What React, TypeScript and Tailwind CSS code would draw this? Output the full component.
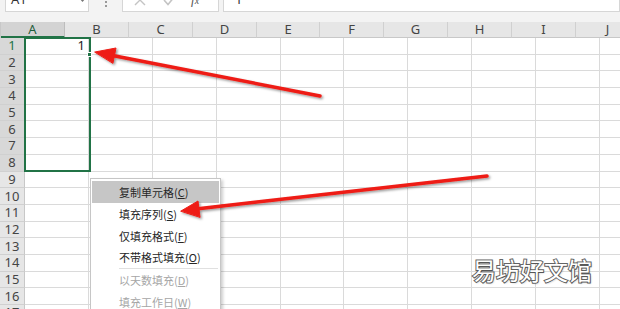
import React from 'react'

const COLS = ['A', 'B', 'C', 'D', 'E', 'F', 'G', 'H', 'I', 'J']
const COL_W = ['w-[64px]', 'w-[64px]', 'w-[64px]', 'w-[64px]', 'w-[63px]', 'w-[64px]', 'w-[64px]', 'w-[64px]', 'w-[64px]', 'w-[64px]']
const ROWS = Array.from({ length: 17 }, (_, i) => i + 1)

type MenuItem = { label: string; key: string; disabled?: boolean; active?: boolean; sep?: boolean }

const MENU: MenuItem[] = [
  { label: '复制单元格', key: 'C', active: true },
  { label: '填充序列', key: 'S' },
  { label: '仅填充格式', key: 'F' },
  { label: '不带格式填充', key: 'O', sep: true },
  { label: '以天数填充', key: 'D', disabled: true },
  { label: '填充工作日', key: 'W', disabled: true },
]

function FormulaBar() {
  return (
    <div className="flex h-[22px] overflow-hidden bg-[#f3f3f3] text-[13px] text-[#333]">
      <div className="ml-[5px] mt-[-12px] flex h-[24px] w-[84px] items-center justify-between border border-[#d6d6d6] bg-white pl-[5px] pr-[2px]">
        <span>A1</span>
        <svg width="7" height="5" viewBox="0 0 7 5">
          <path d="M0.5 0.5 L3.5 4 L6.5 0.5 Z" fill="#777" />
        </svg>
      </div>
      <div className="flex w-[33px] justify-center">
        <div className="mt-[1px] flex flex-col gap-[2px]">
          <div className="h-[2px] w-[2px] bg-[#999]" />
          <div className="h-[2px] w-[2px] bg-[#999]" />
        </div>
      </div>
      <div className="mt-[-12px] flex h-[24px] w-[97px] items-center border border-[#d6d6d6] bg-white">
        <svg className="ml-[11px]" width="12" height="12" viewBox="0 0 12 12">
          <path d="M1 1 L11 11 M11 1 L1 11" stroke="#c4c4c4" strokeWidth="1.4" fill="none" />
        </svg>
        <svg className="ml-[17px]" width="13" height="11" viewBox="0 0 13 11">
          <path d="M1 5 L5 9.5 L12 1" stroke="#c4c4c4" strokeWidth="1.6" fill="none" />
        </svg>
        <span className="ml-[15px] font-['Liberation_Serif',serif] text-[13px] italic text-[#555]">
          f<span className="text-[10px]">x</span>
        </span>
      </div>
      <div className="ml-[4px] mt-[-12px] flex h-[24px] flex-1 items-center border border-[#d6d6d6] bg-white pl-[11px]">
        1
      </div>
    </div>
  )
}

function Sheet() {
  return (
    <div className="font-['Noto_Sans','Noto_Sans_CJK_SC',sans-serif] text-[13px] text-[#444]">
      <div className="flex h-[16px]">
        <div className="relative w-[25px] border-b border-r border-[#c8c8c8] bg-[#e6e6e6]">
          <div className="absolute bottom-[2px] right-[2px] h-0 w-0 border-b-[9px] border-l-[9px] border-b-[#b4b4b4] border-l-transparent" />
        </div>
        {COLS.map((c, i) => (
          <div
            key={c}
            className={`${COL_W[i]} flex shrink-0 items-center justify-center border-r leading-none ${
              i === 0
                ? 'border-b-2 border-b-[#217346] border-r-[#bdbdbd] bg-[#d3d3d3] text-[#1e5e3c]'
                : 'border-b border-b-[#c8c8c8] border-r-[#d0d0d0] bg-[#e6e6e6]'
            }`}
          >
            {c}
          </div>
        ))}
      </div>
      {ROWS.map((r) => (
        <div key={r} className="flex h-[16.7px]">
          <div
            className={`flex w-[25px] shrink-0 items-center justify-center border-b border-r text-[13px] leading-none ${
              r <= 8 ? 'border-r-[#217346] bg-[#d8d8d8]' : 'border-r-[#c8c8c8] bg-[#e6e6e6]'
            } ${r === 1 ? 'text-[#217346]' : 'text-[#444]'} border-b-[#d0d0d0]`}
          >
            {r}
          </div>
          {COLS.map((c, i) => (
            <div
              key={c}
              className={`${COL_W[i]} flex shrink-0 items-center justify-end border-b border-r border-[#dadada] pr-[3px] text-[13px] leading-none text-[#222]`}
            >
              {r === 1 && i === 0 ? '1' : ''}
            </div>
          ))}
        </div>
      ))}
    </div>
  )
}

function FillMenu() {
  return (
    <div className="absolute left-[90px] top-[178px] w-[131px] border border-[#c6c6c6] bg-white pt-[2px] font-['Noto_Sans_CJK_SC',sans-serif] text-[11px] shadow-[2px_2px_3px_rgba(0,0,0,0.2)]">
      {MENU.map((m) => (
        <div key={m.key}>
          <div
            className={`mx-[1px] flex items-center pl-[27px] ${m.sep ? 'h-[21px]' : 'h-[22px]'} ${
              m.active ? 'bg-[#c6c6c6]' : ''
            } ${m.disabled ? 'text-[#a6a6a6]' : 'text-[#262626]'}`}
          >
            {m.label}(<span className="underline">{m.key}</span>)
          </div>
          {m.sep && <div className="ml-[28px] mr-[2px] h-px bg-[#e0e0e0]" />}
        </div>
      ))}
    </div>
  )
}

function Arrows() {
  return (
    <svg className="pointer-events-none absolute left-0 top-0" width="620" height="309" viewBox="0 0 620 309">
      <defs>
        <filter id="sh" x="-10%" y="-50%" width="120%" height="200%">
          <feDropShadow dx="1.5" dy="1.5" stdDeviation="1" floodColor="#000" floodOpacity="0.4" />
        </filter>
      </defs>
      <g filter="url(#sh)" fill="#ee1b14" stroke="#ee1b14" strokeLinecap="round">
        <line x1="320" y1="96" x2="110" y2="55" strokeWidth="3.5" />
        <polygon points="95,52 116,48 113,63" strokeWidth="1" strokeLinejoin="round" />
        <line x1="487" y1="176" x2="196" y2="209" strokeWidth="3.5" />
        <polygon points="181,211 198,201 200,217" strokeWidth="1" strokeLinejoin="round" />
      </g>
    </svg>
  )
}

export default function App() {
  return (
    <div className="relative h-[309px] w-[620px] overflow-hidden bg-white">
      <FormulaBar />
      <Sheet />
      {/* selection A1:A8 */}
      <div className="absolute left-[24px] top-[37px] h-[135px] w-[67px] border-2 border-[#217346]" />
      <div className="absolute left-[87px] top-[52px] h-[5px] w-[5px] border border-white bg-[#217346]" />
      <FillMenu />
      <Arrows />
      <div className="absolute left-[472px] top-[258px] font-['Noto_Sans_CJK_SC',sans-serif] text-[24px] leading-none text-white [-webkit-text-stroke:2px_#666] [paint-order:stroke_fill] [text-shadow:1px_1px_2px_rgba(0,0,0,0.25)]">
        易坊好文馆
      </div>
    </div>
  )
}
